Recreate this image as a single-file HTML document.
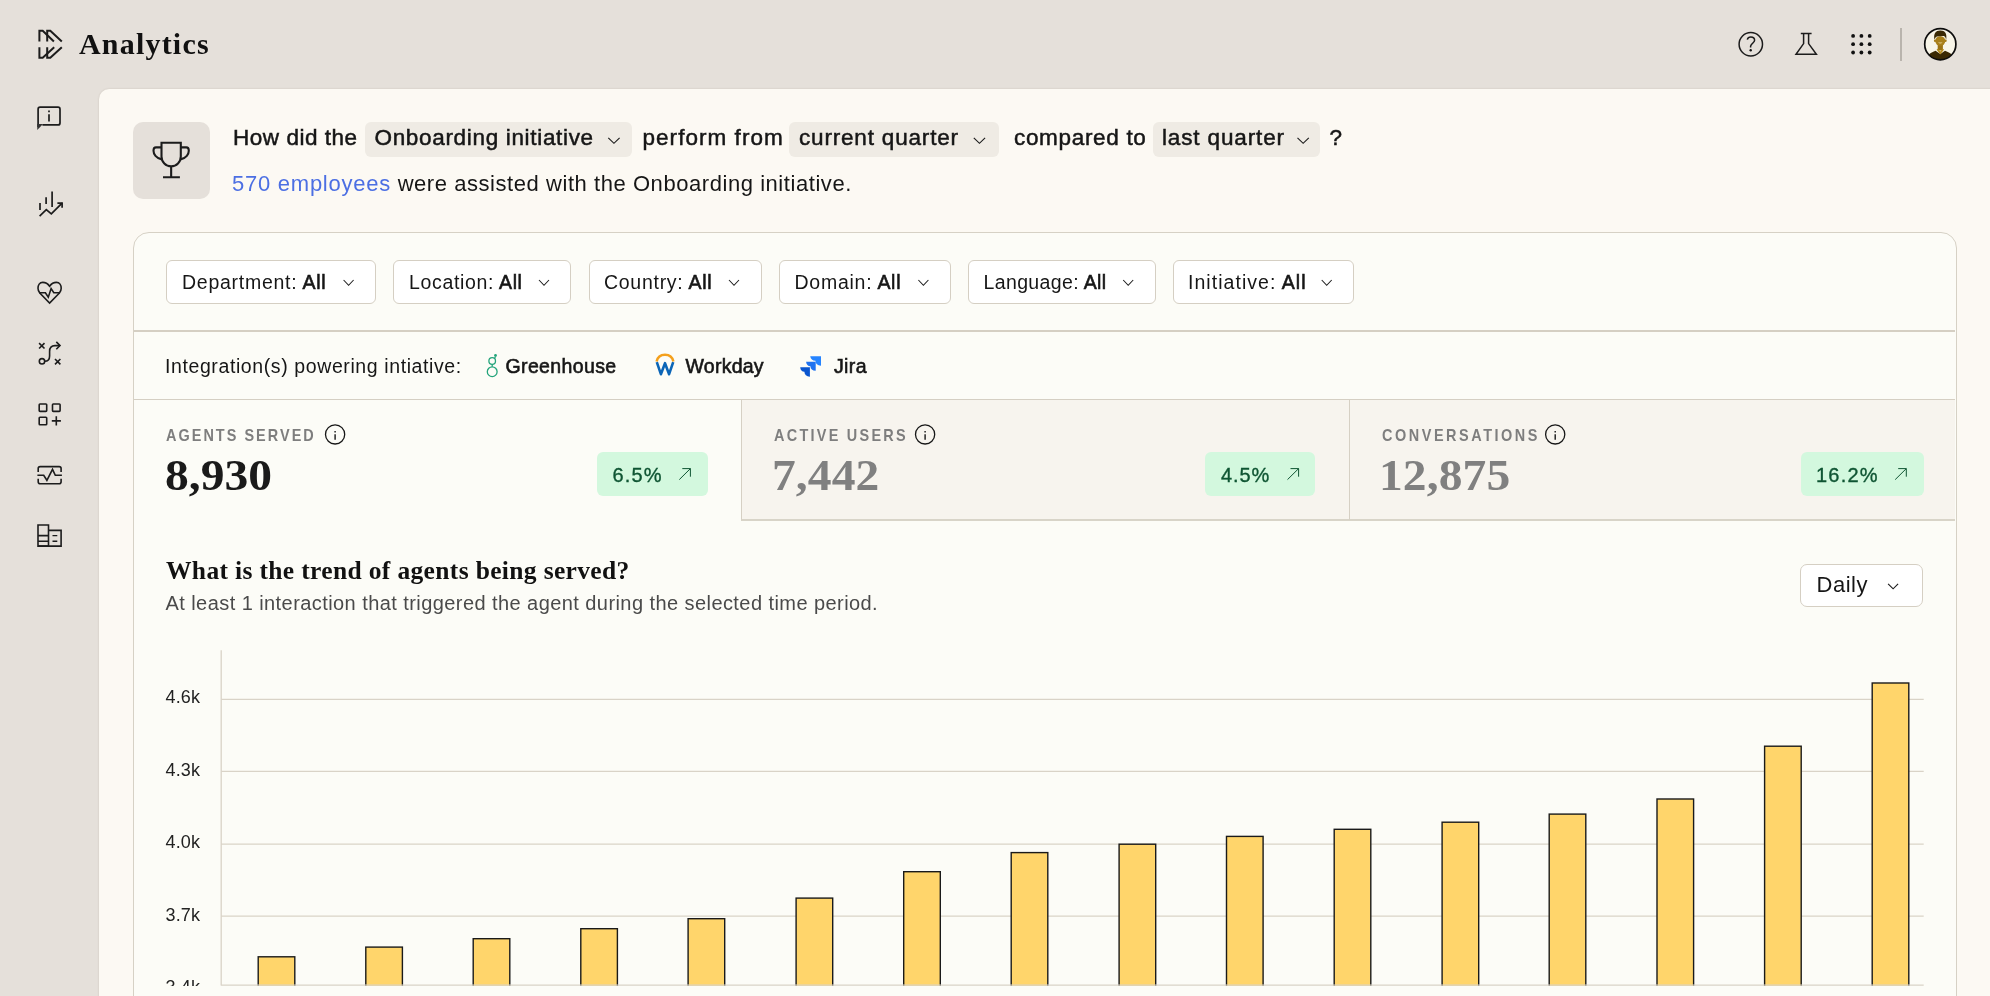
<!DOCTYPE html>
<html>
<head>
<meta charset="utf-8">
<style>
*{box-sizing:border-box;margin:0;padding:0}
html,body{width:1990px;height:996px;overflow:hidden}
body{background:#e5e0da;font-family:"Liberation Sans",sans-serif;color:#161616;position:relative}
.a{position:absolute;white-space:nowrap}
.serif{font-family:"Liberation Serif",serif}
svg{position:absolute;overflow:visible}
.ic{fill:none;stroke:#1c1c1c;stroke-linecap:butt;stroke-linejoin:miter}
#panel{position:absolute;left:99px;top:88.5px;width:1900px;height:920px;background:#fcf9f3;border-top-left-radius:10px;box-shadow:0 0 2px rgba(80,60,40,.18)}
.chip{position:absolute;top:122px;height:35px;background:#efebe4;border-radius:6px}
.hd{font-size:22.5px;line-height:22.5px;letter-spacing:0.62px;-webkit-text-stroke:0.5px #161616;color:#161616}
#card{position:absolute;left:132.7px;top:232px;width:1824px;height:800px;background:#fcfcf7;border:1.7px solid #d6d1c5;border-radius:16px;overflow:hidden}
.fb{position:absolute;top:260px;height:44px;background:#fff;border:1.5px solid #d5cfc3;border-radius:6px}
.ft{font-size:19.5px;line-height:19.5px;color:#161616}
.ft b{font-weight:normal;-webkit-text-stroke:0.6px #161616}
.lbl{font-size:17px;line-height:17px;font-weight:bold;color:#7e7e7e;transform:scaleX(0.85);transform-origin:0 0}
.num{font-family:"Liberation Serif",serif;font-weight:bold;font-size:44px;line-height:44px;transform:scaleX(1.08);transform-origin:0 0}
.badge{position:absolute;top:452px;height:43.5px;background:#d3f8de;border-radius:6px}
.bt{font-size:20px;line-height:20px;color:#0f5533;-webkit-text-stroke:0.35px #0f5533}
.yl{font-size:18px;line-height:18px;color:#222;letter-spacing:0.17px}
</style>
</head>
<body><div id="root" style="position:absolute;left:0;top:0;width:1990px;height:996px;will-change:transform">

<!-- logo -->
<svg width="30" height="34" style="left:34px;top:26px" viewBox="34 26 30 34">
  <g class="ic" stroke="#111" stroke-width="2">
    <path d="M39.4 41.5 V30.7 H42.7 L53.9 41.5"/>
    <path d="M47.2 41.5 V30.7 H50.3 L61.8 41.5"/>
    <path d="M39.4 47.3 V57.8 H42.7 L54.2 47.3"/>
    <path d="M47.2 47.3 V57.8 H50.3 L61.8 47.3"/>
  </g>
</svg>
<div class="a serif" style="left:79px;top:28.6px;font-size:30px;line-height:30px;font-weight:bold;letter-spacing:1.2px;color:#111">Analytics</div>

<!-- top right icons -->
<svg width="30" height="30" style="left:1736px;top:30px" viewBox="1736 30 30 30">
  <g class="ic" stroke="#111" stroke-width="1.5">
    <circle cx="1750.8" cy="44.2" r="11.7"/>
    <path d="M1747.3 39.6 C1747.8 37.6 1749.2 37 1750.8 37 C1753 37 1754.6 38.4 1754.6 40.3 C1754.6 42.6 1751.3 43.2 1750.6 46.2 V47.4" stroke-linecap="butt"/>
  </g>
  <circle cx="1750.7" cy="50.2" r="1.2" fill="#111"/>
</svg>
<svg width="30" height="30" style="left:1791px;top:30px" viewBox="1791 30 30 30">
  <g class="ic" stroke="#111" stroke-width="1.5" stroke-linejoin="round">
    <path d="M1800.8 33.5 H1811.6"/>
    <path d="M1803.6 33.5 V43.6 L1796 54.3 H1816.4 L1808.6 43.6 V33.5"/>
  </g>
</svg>
<svg width="30" height="30" style="left:1846px;top:30px" viewBox="1846 30 30 30">
  <g fill="#111">
    <circle cx="1853.1" cy="35.9" r="1.9"/><circle cx="1861.4" cy="35.9" r="1.9"/><circle cx="1869.7" cy="35.9" r="1.9"/>
    <circle cx="1853.1" cy="44.2" r="1.9"/><circle cx="1861.4" cy="44.2" r="1.9"/><circle cx="1869.7" cy="44.2" r="1.9"/>
    <circle cx="1853.1" cy="52.5" r="1.9"/><circle cx="1861.4" cy="52.5" r="1.9"/><circle cx="1869.7" cy="52.5" r="1.9"/>
  </g>
</svg>
<div class="a" style="left:1900px;top:28px;width:1.5px;height:33px;background:#b9b4ad"></div>
<svg width="36" height="36" style="left:1922px;top:26px" viewBox="1922 26 36 36">
  <defs><clipPath id="av"><circle cx="1940.3" cy="44.2" r="15.6"/></clipPath></defs>
  <circle cx="1940.3" cy="44.2" r="15.6" fill="#f8f5e8"/>
  <g clip-path="url(#av)">
    <path d="M1937.7 44 H1942.9 V50.5 H1937.7 Z" fill="#9c7414"/>
    <path d="M1925 63 C1926 56 1930 52.6 1935.6 50.8 L1940.3 54 L1945 50.8 C1950.6 52.6 1954.6 56 1955.6 63 Z" fill="#3a2904"/>
    <path d="M1936.6 49.4 L1940.3 54.6 L1944 49.4 L1942.8 48.8 L1940.3 51.6 L1937.8 48.8 Z" fill="#b58b1d"/>
    <circle cx="1935.1" cy="40.8" r="1.2" fill="#a57c18"/>
    <circle cx="1945.5" cy="40.8" r="1.2" fill="#a57c18"/>
    <ellipse cx="1940.3" cy="41" rx="5" ry="4.8" fill="#a9801a"/>
    <path d="M1934.4 39.4 C1933.4 33.6 1935.8 30.6 1940.2 30.5 C1945 30.4 1947.2 33.6 1946.2 39.4 L1945.3 37.2 C1944.6 35.9 1943.4 35.8 1942 36.1 C1939.8 36.6 1937.2 36 1935.9 37 Z" fill="#3a2904"/>
    <path d="M1938 42.4 Q1940.3 44.6 1942.6 42.4 Z" fill="#e7d59c"/>
  </g>
  <circle cx="1940.3" cy="44.2" r="15.6" fill="none" stroke="#0d0d0d" stroke-width="1.7"/>
</svg>

<!-- sidebar icons -->
<svg width="30" height="30" style="left:34px;top:103px" viewBox="34 103 30 30">
  <g class="ic" stroke="#333" stroke-width="1.7">
    <path d="M38.1 127 V109.2 Q38.1 107.2 40.1 107.2 H58 Q60 107.2 60 109.2 V122.9 Q60 124.9 58 124.9 H42.4" stroke-linejoin="round"/>
    <path d="M37.25 124 V130 L43 124.05 Z" fill="#333" stroke="none"/>
    <path d="M49 114.2 V121.6"/>
    <path d="M49 110.6 V112.2"/>
  </g>
</svg>
<svg width="30" height="30" style="left:34px;top:189px" viewBox="34 189 30 30">
  <g class="ic" stroke="#1c1c1c" stroke-width="1.7">
    <path d="M40 203.1 V209.9"/>
    <path d="M46.1 197.2 V203.9"/>
    <path d="M52.1 191.6 V206.9"/>
    <path d="M39.6 216.1 L46.3 209.7 L51.3 213.9 L62.1 203.1"/>
    <path d="M57.4 203.1 H62.1 V207.8"/>
  </g>
</svg>
<svg width="30" height="30" style="left:34px;top:278px" viewBox="34 278 30 30">
  <g class="ic" stroke="#1c1c1c" stroke-width="1.6" stroke-linejoin="round">
    <path d="M49.6 286.2 C47.5 283.3 45 282.4 42.8 282.4 C39.5 282.4 38 285.5 38 288.3 C38 290.5 38.8 291.8 39.8 293 L49.6 303 L59.4 293 C60.4 291.8 61.2 290.5 61.2 288.3 C61.2 285.5 59.7 282.4 56.4 282.4 C54.2 282.4 51.7 283.3 49.6 286.2 Z"/>
    <path d="M39.2 292.7 H45.4 L48.3 297.2 L51.1 288.6 L53.8 292.7 H60"/>
  </g>
</svg>
<svg width="30" height="30" style="left:34px;top:339px" viewBox="34 339 30 30">
  <g class="ic" stroke="#1c1c1c" stroke-width="1.6">
    <path d="M39.1 343.1 L44.5 348.5 M44.5 343.1 L39.1 348.5"/>
    <path d="M55 359 L60.4 364.4 M60.4 359 L55 364.4"/>
    <circle cx="42" cy="361.3" r="2.7"/>
    <path d="M44.7 361.3 C47.8 361.3 49.6 359.5 49.6 356 V351.5 C49.6 347.8 51.6 345.6 55 345.6 H60"/>
    <path d="M56.3 341.9 L60 345.6 L56.3 349.3"/>
  </g>
</svg>
<svg width="30" height="30" style="left:34px;top:399px" viewBox="34 399 30 30">
  <g class="ic" stroke="#111" stroke-width="1.6">
    <rect x="39.2" y="404" width="7.5" height="7.4" rx="0.8"/>
    <rect x="52.5" y="404" width="7.6" height="7.4" rx="0.8"/>
    <rect x="39.2" y="417.3" width="7.5" height="7.4" rx="0.8"/>
    <path d="M51.8 420.9 H60.9 M56.3 416.3 V425.5"/>
  </g>
</svg>
<svg width="30" height="30" style="left:34px;top:460px" viewBox="34 460 30 30">
  <g class="ic" stroke="#111" stroke-width="1.6" stroke-linejoin="round">
    <path d="M38.2 471.9 V468.6 Q38.2 466.6 40.2 466.6 H59.1 Q61.1 466.6 61.1 468.6 V471.9"/>
    <path d="M38.2 478.7 V481.7 Q38.2 483.7 40.2 483.7 H59.1 Q61.1 483.7 61.1 481.7 V478.7"/>
    <path d="M37.4 475.3 H43.7 L46.9 480.3 L52.5 469.3 L55.3 475.3 H61.9"/>
  </g>
</svg>
<svg width="30" height="30" style="left:34px;top:520px" viewBox="34 520 30 30">
  <g class="ic" stroke="#111" stroke-width="1.6">
    <path d="M38 546.1 V525 H48.5 V546.1 Z"/>
    <path d="M48.5 530.4 H61.1 V546.1 H38"/>
    <path d="M38 535.6 H48.5 M38 541.3 H48.5"/>
    <path d="M52.5 535.6 H57.3 M52.5 541.3 H57.3" stroke-width="1.4"/>
  </g>
</svg>

<div id="panel"></div>

<!-- heading -->
<div class="a" style="left:133px;top:122px;width:77px;height:77px;background:#e5e0da;border-radius:10px"></div>
<svg width="40" height="40" style="left:151px;top:140px" viewBox="151 140 40 40">
  <g class="ic" stroke="#111" stroke-width="2.1">
    <path d="M161.5 142.8 H180.8 V156.5 C180.8 162 176.5 166.3 171.15 166.3 C165.8 166.3 161.5 162 161.5 156.5 Z"/>
    <path d="M161.5 147.4 H156 C153.8 147.4 153.5 149 153.5 150.8 C153.5 154 156 158.2 161.8 159.4"/>
    <path d="M180.8 147.4 H186.3 C188.5 147.4 188.8 149 188.8 150.8 C188.8 154 186.3 158.2 180.5 159.4"/>
    <path d="M171.15 166.3 V177 M163 177.3 H179.9"/>
  </g>
</svg>

<div class="a hd" style="left:233px;top:127px;letter-spacing:0.53px">How did the</div>
<div class="chip" style="left:365px;width:267px"></div>
<div class="a hd" style="left:374.5px;top:127px;letter-spacing:0.675px">Onboarding initiative</div>
<div class="a hd" style="left:642.5px;top:127px;letter-spacing:1.04px">perform from</div>
<div class="chip" style="left:789px;width:210px"></div>
<div class="a hd" style="left:799px;top:127px;letter-spacing:0.82px">current quarter</div>
<div class="a hd" style="left:1014px;top:127px;letter-spacing:0.68px">compared to</div>
<div class="chip" style="left:1153px;width:167px"></div>
<div class="a hd" style="left:1162px;top:127px;letter-spacing:0.86px">last quarter</div>
<div class="a hd" style="left:1329.5px;top:127px">?</div>
<svg width="20" height="20" style="left:600px;top:130px" viewBox="600 130 20 20"><path class="ic" stroke="#161616" stroke-width="1.15" d="M608.3 137.8 L613.95 143.3 L619.6 137.8"/></svg>
<svg width="20" height="20" style="left:960px;top:130px" viewBox="960 130 20 20"><path class="ic" stroke="#161616" stroke-width="1.15" d="M973.8 137.8 L979.45 143.3 L985.1 137.8"/></svg>
<svg width="20" height="20" style="left:1290px;top:130px" viewBox="1290 130 20 20"><path class="ic" stroke="#161616" stroke-width="1.15" d="M1297.5 137.8 L1303.15 143.3 L1308.8 137.8"/></svg>

<div class="a" style="left:232px;top:172.8px;font-size:22px;line-height:22px;letter-spacing:0.555px;color:#161616"><span style="color:#4c6fe3;letter-spacing:0.75px">570 employees</span> were assisted with the Onboarding initiative.</div>

<!-- CARD -->
<div id="card"></div>

<!-- filters -->
<div class="fb" style="left:166px;width:210px"></div>
<div class="fb" style="left:393px;width:177.5px"></div>
<div class="fb" style="left:588.5px;width:173px"></div>
<div class="fb" style="left:778.5px;width:172px"></div>
<div class="fb" style="left:968px;width:187.5px"></div>
<div class="fb" style="left:1173px;width:180.5px"></div>
<div class="a ft" style="left:182px;top:272.6px;letter-spacing:0.74px">Department: <b>All</b></div>
<div class="a ft" style="left:409px;top:272.6px;letter-spacing:0.65px">Location: <b>All</b></div>
<div class="a ft" style="left:604px;top:272.6px;letter-spacing:0.72px">Country: <b>All</b></div>
<div class="a ft" style="left:794.5px;top:272.6px;letter-spacing:0.74px">Domain: <b>All</b></div>
<div class="a ft" style="left:983.5px;top:272.6px;letter-spacing:0.37px">Language: <b>All</b></div>
<div class="a ft" style="left:1188px;top:272.6px;letter-spacing:1.04px">Initiative: <b>All</b></div>
<svg width="1200" height="20" style="left:300px;top:272px" viewBox="300 272 1200 20">
  <g class="ic" stroke="#161616" stroke-width="1.05">
    <path d="M343.6 280 L348.6 285.3 L353.6 280"/>
    <path d="M539 280 L544 285.3 L549 280"/>
    <path d="M729 280 L734 285.3 L739 280"/>
    <path d="M918.4 280 L923.4 285.3 L928.4 280"/>
    <path d="M1123.2 280 L1128.2 285.3 L1133.2 280"/>
    <path d="M1321.7 280 L1326.7 285.3 L1331.7 280"/>
  </g>
</svg>
<div class="a" style="left:134px;top:330.3px;width:1821px;height:1.5px;background:#d5cfc3"></div>

<!-- integrations -->
<div class="a" style="left:165px;top:357px;font-size:19.5px;line-height:19.5px;letter-spacing:0.6px;color:#161616">Integration(s) powering intiative:</div>
<svg width="20" height="26" style="left:482px;top:352px" viewBox="482 352 20 26">
  <g fill="none" stroke="#23a47b" stroke-width="1.3">
    <circle cx="492.2" cy="361" r="3.3"/>
    <circle cx="492.2" cy="371.7" r="4.9"/>
    <path d="M492.2 364.3 V366.8 M494.4 358.6 L495.4 357"/>
  </g>
  <circle cx="495.5" cy="355.5" r="1.4" fill="#23a47b"/>
</svg>
<div class="a" style="left:505.5px;top:357px;font-size:19.5px;line-height:19.5px;-webkit-text-stroke:0.6px #161616;letter-spacing:0.37px;color:#161616">Greenhouse</div>
<svg width="24" height="26" style="left:653px;top:352px" viewBox="653 352 24 26">
  <path d="M656.6 361.6 C657.5 357.4 660.8 354.8 665 354.8 C669.2 354.8 672.5 357.4 673.4 361.6" fill="none" stroke="#f4a01c" stroke-width="2.5"/>
  <path d="M656.8 362.2 L660.9 374.2 L665 363.2 L669.1 374.2 L673.2 362.2" fill="none" stroke="#0b65b7" stroke-width="2.6" stroke-linejoin="round"/>
</svg>
<div class="a" style="left:685.5px;top:357px;font-size:19.5px;line-height:19.5px;-webkit-text-stroke:0.6px #161616;letter-spacing:0.25px;color:#161616">Workday</div>
<svg width="26" height="26" style="left:798px;top:353px" viewBox="798 353 26 26">
  <path d="M810.2 356.2 H821 V365.7 Q815.6 365.4 815.4 360.8 Q811 360.6 810.2 356.2 Z" fill="#2684ff"/>
  <path d="M806.1 361.7 H815.7 V370.8 Q810.6 370.5 810.4 366.2 Q806.6 366 806.1 361.7 Z" fill="#1f72f0"/>
  <path d="M800.2 367.2 H809.9 V376.7 Q804.6 376.3 804.4 371.8 Q800.6 371.5 800.2 367.2 Z" fill="#0a55cf"/>
</svg>
<div class="a" style="left:834px;top:357px;font-size:19.5px;line-height:19.5px;-webkit-text-stroke:0.6px #161616;letter-spacing:0.35px;color:#161616">Jira</div>
<div class="a" style="left:134px;top:398.8px;width:1821px;height:1.5px;background:#d5cfc3"></div>

<!-- metrics -->
<div class="a" style="left:741px;top:400px;width:1213.7px;height:121px;background:#f7f4ee;border-left:1.3px solid #d6d0c4;border-bottom:2px solid #d8d4c8"></div>
<div class="a" style="left:1349px;top:400px;width:1.3px;height:120px;background:#d6d0c4"></div>

<div class="a lbl" style="left:165.5px;top:427.2px;letter-spacing:2.39px">AGENTS SERVED</div>
<div class="a lbl" style="left:773.7px;top:427.2px;letter-spacing:2.66px">ACTIVE USERS</div>
<div class="a lbl" style="left:1381.5px;top:427.2px;letter-spacing:2.99px">CONVERSATIONS</div>
<svg width="1300" height="24" style="left:320px;top:422px" viewBox="320 422 1300 24">
  <g fill="none" stroke="#161616" stroke-width="1.3">
    <circle cx="335.1" cy="434.4" r="9.6"/>
    <circle cx="925.1" cy="434.4" r="9.6"/>
    <circle cx="1555.2" cy="434.4" r="9.6"/>
  </g>
  <g stroke="#161616" stroke-width="1.4">
    <path d="M335.1 434.2 V439.8 M925.1 434.2 V439.8 M1555.2 434.2 V439.8"/>
    <path d="M335.1 431 V432.5 M925.1 431 V432.5 M1555.2 431 V432.5"/>
  </g>
</svg>
<div class="a num" style="left:165px;top:453.7px;letter-spacing:0px;color:#1a1a1a">8,930</div>
<div class="a num" style="left:771.8px;top:453.7px;letter-spacing:0.1px;color:#808080">7,442</div>
<div class="a num" style="left:1379.3px;top:453.7px;letter-spacing:0.1px;color:#808080">12,875</div>

<div class="badge" style="left:597px;width:110.5px"></div>
<div class="badge" style="left:1205.4px;width:110px"></div>
<div class="badge" style="left:1801px;width:122.8px"></div>
<div class="a bt" style="left:612.5px;top:464.7px;letter-spacing:1.17px">6.5%</div>
<div class="a bt" style="left:1221px;top:464.7px;letter-spacing:0.9px">4.5%</div>
<div class="a bt" style="left:1816px;top:464.7px;letter-spacing:1.22px">16.2%</div>
<svg width="1300" height="20" style="left:670px;top:462px" viewBox="670 462 1300 20">
  <g fill="none" stroke="#0f5533" stroke-width="1.0">
    <path d="M679.3 479.6 L690.4 468.6 M682.3 468.6 H690.4 V476.7"/>
    <path d="M1287.5 479.6 L1298.6 468.6 M1290.5 468.6 H1298.6 V476.7"/>
    <path d="M1895.2 479.6 L1906.3 468.6 M1898.2 468.6 H1906.3 V476.7"/>
  </g>
</svg>

<!-- chart header -->
<div class="a serif" style="left:166px;top:557.5px;font-size:25.5px;line-height:25.5px;font-weight:bold;letter-spacing:0.35px;color:#111">What is the trend of agents being served?</div>
<div class="a" style="left:165.5px;top:593px;font-size:20px;line-height:20px;letter-spacing:0.43px;color:#4a4a4a">At least 1 interaction that triggered the agent during the selected time period.</div>
<div class="fb" style="left:1800px;top:563.5px;width:123.2px;height:43.5px;border-radius:7px"></div>
<div class="a" style="left:1816.5px;top:573.5px;font-size:22px;line-height:22px;letter-spacing:0.53px;color:#161616">Daily</div>
<svg width="20" height="20" style="left:1880px;top:576px" viewBox="1880 576 20 20"><path class="ic" stroke="#161616" stroke-width="1.15" d="M1888.1 583.8 L1893.1 588.8 L1898.1 583.8"/></svg>

<!-- chart -->
<div class="a yl" style="left:165.5px;top:687.5px">4.6k</div>
<div class="a yl" style="left:165.5px;top:761.3px">4.3k</div>
<div class="a yl" style="left:165.5px;top:833.3px">4.0k</div>
<div class="a yl" style="left:165.5px;top:905.5px">3.7k</div>
<div class="a" style="left:150px;top:960px;width:60px;height:26px;overflow:hidden"><div class="a yl" style="left:15.5px;top:17.8px">3.4k</div></div>
<svg width="1760" height="340" style="left:200px;top:646px;overflow:hidden" viewBox="200 646 1760 340">
  <g stroke="#d9d3c7" stroke-width="1.3" fill="none">
    <path d="M221.2 650.3 V985.5"/>
    <path d="M221.2 699.4 H1923.7 M221.2 771.3 H1923.7 M221.2 844.2 H1923.7 M221.2 916.1 H1923.7"/>
  </g>
  <g fill="#ffd56b" stroke="#1a1a1a" stroke-width="1.4">
<rect x="258.2" y="956.8" width="36.6" height="33.9"/>
<rect x="365.8" y="947.1" width="36.6" height="43.6"/>
<rect x="473.2" y="938.7" width="36.6" height="52.0"/>
<rect x="580.8" y="928.7" width="36.6" height="62.0"/>
<rect x="688.1" y="918.7" width="36.6" height="72.0"/>
<rect x="796.1" y="898.1" width="36.6" height="92.6"/>
<rect x="903.7" y="871.7" width="36.6" height="119.0"/>
<rect x="1011.2" y="852.6" width="36.6" height="138.1"/>
<rect x="1119.1" y="844.2" width="36.6" height="146.5"/>
<rect x="1226.5" y="836.4" width="36.6" height="154.3"/>
<rect x="1334.2" y="829.3" width="36.6" height="161.4"/>
<rect x="1442.1" y="822.2" width="36.6" height="168.5"/>
<rect x="1549.2" y="814.1" width="36.6" height="176.6"/>
<rect x="1657.0" y="799.0" width="36.6" height="191.7"/>
<rect x="1764.6" y="746.2" width="36.6" height="244.5"/>
<rect x="1872.2" y="683.0" width="36.6" height="307.7"/>
  </g>
  <path d="M221.2 985.2 H1923.7" stroke="#d9d3c7" stroke-width="1.3"/>
</svg>

</div></body>
</html>
